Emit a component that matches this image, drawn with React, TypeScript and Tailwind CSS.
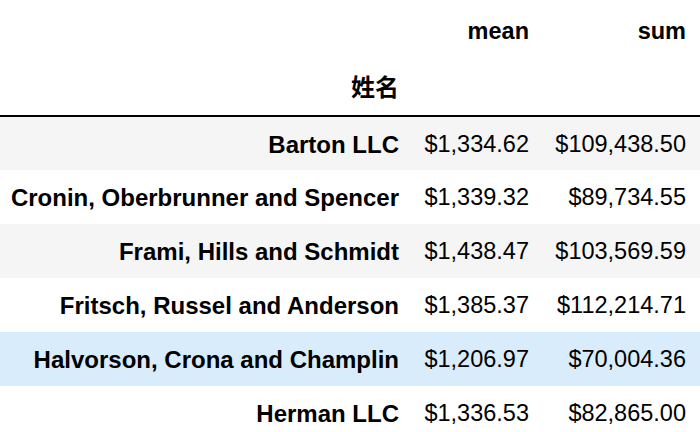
import React from "react";

const rows = [
  { name: "Barton LLC", mean: "$1,334.62", sum: "$109,438.50", bg: "bg-[#f5f5f5]" },
  { name: "Cronin, Oberbrunner and Spencer", mean: "$1,339.32", sum: "$89,734.55", bg: "bg-white" },
  { name: "Frami, Hills and Schmidt", mean: "$1,438.47", sum: "$103,569.59", bg: "bg-[#f5f5f5]" },
  { name: "Fritsch, Russel and Anderson", mean: "$1,385.37", sum: "$112,214.71", bg: "bg-white" },
  { name: "Halvorson, Crona and Champlin", mean: "$1,206.97", sum: "$70,004.36", bg: "bg-[#d9ecfc]" },
  { name: "Herman LLC", mean: "$1,336.53", sum: "$82,865.00", bg: "bg-white" },
];

export default function App() {
  return (
    <div
      className="w-[700px] h-[432px] overflow-hidden bg-white text-black"
      style={{ fontFamily: '"Liberation Sans", Arial, "Noto Sans CJK SC", sans-serif' }}
    >
      <table className="w-[700px] table-fixed border-collapse text-[23.5px] leading-none">
        <colgroup>
          <col className="w-[411px]" />
          <col className="w-[130px]" />
          <col className="w-[159px]" />
        </colgroup>
        <thead className="border-b-2 border-black">
          <tr className="h-[59px]">
            <th className="px-[12px]"></th>
            <th className="pl-0 pr-[12px] pt-[4px] text-right font-bold">mean</th>
            <th className="pl-0 pr-[14px] pt-[4px] text-right font-bold">sum</th>
          </tr>
          <tr className="h-[57px]">
            <th className="px-[12px] pt-[2px] text-right font-bold text-[24px]">姓名</th>
            <th></th>
            <th></th>
          </tr>
        </thead>
        <tbody>
          {rows.map((r) => (
            <tr key={r.name} className={`h-[54px] ${r.bg}`}>
              <th className="pl-[8px] pr-[12px] pt-[2px] text-right font-bold text-[24px] whitespace-nowrap">{r.name}</th>
              <td className="pl-0 pr-[12px] pt-[2px] text-right whitespace-nowrap">{r.mean}</td>
              <td className="pl-0 pr-[14px] pt-[2px] text-right whitespace-nowrap">{r.sum}</td>
            </tr>
          ))}
        </tbody>
      </table>
    </div>
  );
}
